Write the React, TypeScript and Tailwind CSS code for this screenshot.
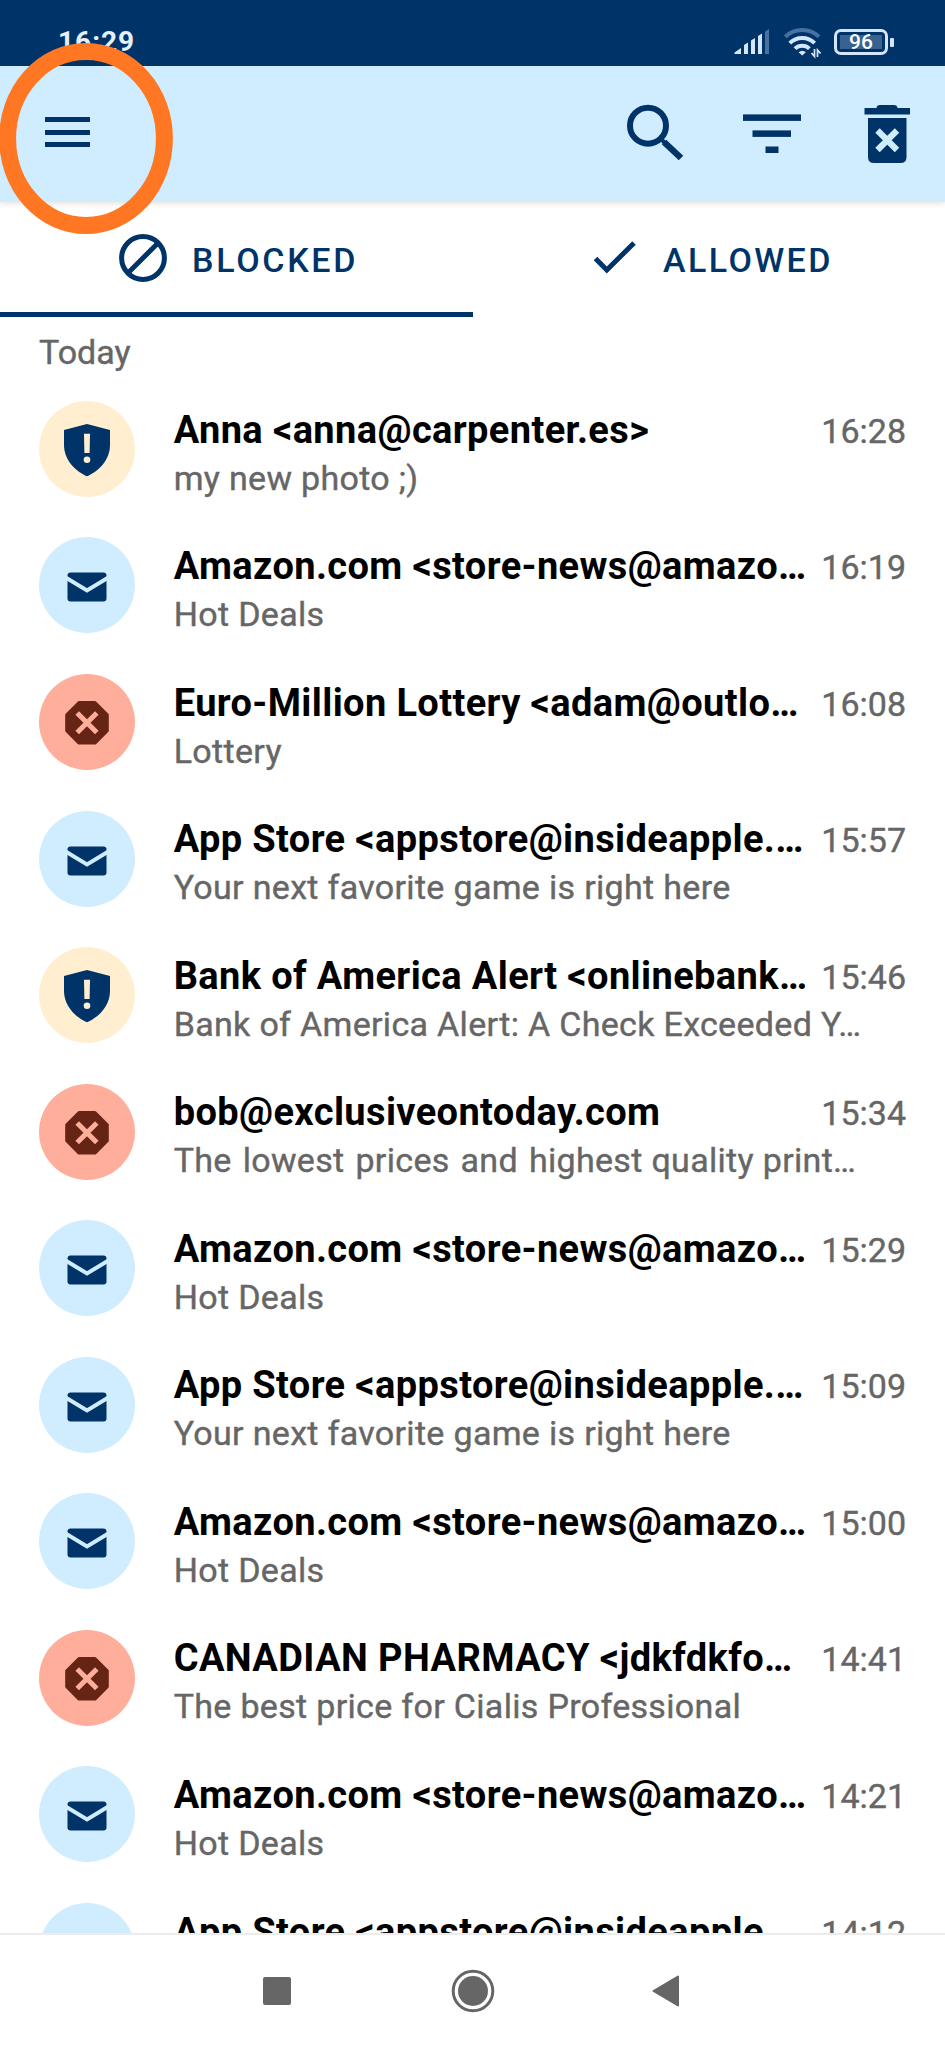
type Kind = "warning" | "mail" | "spam";

interface Message {
  id: number;
  kind: Kind;
  sender: string;
  // leading part of the subject that is set with wider word gaps
  spaced?: string;
  subject?: string;
  time: string;
}

const messages: Message[] = [
  { id: 1, kind: "warning", sender: "Anna <anna@carpenter.es>", subject: "my new photo ;)", time: "16:28" },
  { id: 2, kind: "mail", sender: "Amazon.com <store-news@amazo…", subject: "Hot Deals", time: "16:19" },
  { id: 3, kind: "spam", sender: "Euro-Million Lottery <adam@outlo…", subject: "Lottery", time: "16:08" },
  { id: 4, kind: "mail", sender: "App Store <appstore@insideapple.…", subject: "Your next favorite game is right here", time: "15:57" },
  { id: 5, kind: "warning", sender: "Bank of America Alert <onlinebank…", subject: "Bank of America Alert: A Check Exceeded Y…", time: "15:46" },
  { id: 6, kind: "spam", sender: "bob@exclusiveontoday.com", spaced: "The lowest prices and highest", subject: " quality print…", time: "15:34" },
  { id: 7, kind: "mail", sender: "Amazon.com <store-news@amazo…", subject: "Hot Deals", time: "15:29" },
  { id: 8, kind: "mail", sender: "App Store <appstore@insideapple.…", subject: "Your next favorite game is right here", time: "15:09" },
  { id: 9, kind: "mail", sender: "Amazon.com <store-news@amazo…", subject: "Hot Deals", time: "15:00" },
  { id: 10, kind: "spam", sender: "CANADIAN PHARMACY <jdkfdkfo…", subject: "The best price for Cialis Professional", time: "14:41" },
  { id: 11, kind: "mail", sender: "Amazon.com <store-news@amazo…", subject: "Hot Deals", time: "14:21" },
  { id: 12, kind: "mail", sender: "App Store <appstore@insideapple.…", time: "14:12" },
];

const avatarBg: Record<Kind, string> = {
  warning: "bg-[#ffefd0]",
  mail: "bg-[#d0ecff]",
  spam: "bg-[#ffae9b]",
};

const Avatar = ({ kind }: { kind: Kind }) => (
  <div className={`size-24 shrink-0 rounded-full ${avatarBg[kind]}`}>
    <svg viewBox="0 0 96 96" className="size-24">
      {kind === "warning" && (
        <>
          <path d="M48 23 L71 29 V44 C71 58 61 69.5 48 75.3 C35 69.5 25 58 25 44 V29 Z" fill="#003468" />
          <path d="M45 32.8 H51 L50.6 52 H45.4 Z" fill="#ffefd0" />
          <circle cx="48" cy="58.7" r="3.3" fill="#ffefd0" />
        </>
      )}
      {kind === "mail" && (
        <>
          <rect x="28.5" y="35.4" width="39" height="29" rx="3" fill="#003468" />
          <path d="M27 40.8 L48 53.4 L69 40.8" fill="none" stroke="#d0ecff" strokeWidth="4" />
        </>
      )}
      {kind === "spam" && (
        <>
          <path
            d="M40 28.5 H56 L68.3 40.8 V56.8 L56 69.1 H40 L27.7 56.8 V40.8 Z"
            fill="#662415"
            stroke="#662415"
            strokeWidth="3"
            strokeLinejoin="round"
          />
          <path d="M38.2 39 L57.8 58.6 M57.8 39 L38.2 58.6" stroke="#ffae9b" strokeWidth="5" />
        </>
      )}
    </svg>
  </div>
);

const MessageRow = ({ message }: { message: Message }) => (
  <li className="flex h-[136.54px] shrink-0 items-center pr-[39px] pl-[38.7px]">
    <Avatar kind={message.kind} />
    <div className="ml-[39px] h-full min-w-0 flex-1 pt-[26px]">
      <div className="flex h-[46px] items-baseline justify-between leading-[46px] whitespace-nowrap">
        <span className="text-[38px] font-bold tracking-[0.38px] text-black">{message.sender}</span>
        <span className="text-[34px] text-[#666] [-webkit-text-stroke:0.4px_#666]">{message.time}</span>
      </div>
      <p className="mt-[2px] text-[34px] leading-[46px] tracking-[0.32px] whitespace-pre text-[#666] [-webkit-text-stroke:0.4px_#666]">
        {message.spaced && <span className="[word-spacing:2.2px]">{message.spaced}</span>}
        {message.subject}
      </p>
    </div>
  </li>
);

const StatusBar = () => (
  <div className="flex h-[66px] shrink-0 items-start justify-between bg-[#003468] pr-[51px] pl-[58px]">
    <span className="pt-[25px] text-[28px] leading-[34px] font-bold tracking-[1px] text-[#e6effa]">16:29</span>
    <div className="flex pt-[26px]">
      <svg width="36" height="32" viewBox="0 0 36 32" fill="#d6e6fa">
        <path d="M0.5 28 V26.5 L7 22 V28 Z" />
        <path d="M10 28 V19 L14 16.5 V28 Z" />
        <path d="M17 28 V14.5 L21 12 V28 Z" />
        <path d="M24 28 V10 L28 7.5 V28 Z" />
        <path d="M31 28 V5.5 L35 3 V28 Z" fill="#47719f" />
      </svg>
      <svg className="ml-[13px]" width="40" height="34" viewBox="0 0 40 34" fill="none" strokeWidth="4">
        <path d="M2.3 10.8 A24.5 24.5 0 0 1 36 10.8" stroke="#47719f" />
        <path d="M6.8 17.2 A17.5 17.5 0 0 1 31.6 17.2" stroke="#d6e6fa" />
        <path d="M12 22.6 A10.5 10.5 0 0 1 26.4 22.6" stroke="#d6e6fa" />
        <path d="M15.5 26.3 Q19.2 23 22.9 26.3 L19.2 29.6 Z" fill="#d6e6fa" stroke="none" />
        <path d="M28.5 27 L31.5 30.5 V23 M34.5 31 V24 L37.6 27.5" stroke="#d6e6fa" strokeWidth="1.7" />
      </svg>
      <div className="mt-[3px] ml-[11px] flex h-[26px] items-center">
        <div className="flex h-[26px] w-[54px] items-center justify-center rounded-[7px] border-3 border-[#d6e6fa] p-[3px]">
          <div className="flex h-full w-full items-center justify-center bg-[#38628f] text-[21px] leading-none font-medium text-white">
            96
          </div>
        </div>
        <div className="ml-0.5 h-[9px] w-1 rounded-[1px] bg-[#d6e6fa]" />
      </div>
    </div>
  </div>
);

const AppBar = () => (
  <header className="z-10 flex h-[136px] shrink-0 items-center justify-between bg-[#d0ecff] pr-[34px] pl-[45px] shadow-[0_1px_6px_rgba(90,40,0,0.16)]">
    <button className="flex w-[45px] flex-col gap-[7.6px] pb-1">
      <span className="h-[5px] w-full bg-[#003468]" />
      <span className="h-[5px] w-full bg-[#003468]" />
      <span className="h-[5px] w-full bg-[#003468]" />
    </button>
    <div className="flex items-center">
      <button>
        <svg width="60" height="60" viewBox="0 0 60 60" fill="none" stroke="#003468">
          <circle cx="23" cy="21.7" r="18" strokeWidth="6" />
          <path d="M39 38 L56 54" strokeWidth="6.5" />
          <path d="M36 35 L42 41" strokeWidth="4" />
        </svg>
      </button>
      <button className="ml-[58px]">
        <svg width="58" height="60" viewBox="0 0 58 60" fill="#003468">
          <rect x="0" y="10.4" width="58" height="6.5" />
          <rect x="9.5" y="26.4" width="38.5" height="6.5" />
          <rect x="22.5" y="42.5" width="13" height="6.5" />
        </svg>
      </button>
      <button className="ml-[63px]">
        <svg width="47" height="60" viewBox="0 0 47 60" fill="#003468">
          <path d="M0.5 4 H12.5 C12.5 2.2 14 1 16 1 H30 C32 1 33.5 2.2 33.5 4 H46 V10.6 H0.5 Z" />
          <path d="M4 14 H42.5 V53 Q42.5 59 36.5 59 H10 Q4 59 4 53 Z" />
          <path d="M13.5 26.5 L33 46 M33 26.5 L13.5 46" stroke="#d0ecff" strokeWidth="6.2" />
        </svg>
      </button>
    </div>
  </header>
);

const Tabs = () => (
  <div className="grid h-[115px] shrink-0 grid-cols-2 text-[34px] font-medium tracking-[2.7px] text-[#003468]">
    <button className="flex items-center border-b-[5.5px] border-[#003468] pt-0.5 pl-[119px]">
      <svg width="48" height="48" viewBox="0 0 48 48" fill="none" stroke="#003468" strokeWidth="5">
        <circle cx="24" cy="24" r="21.4" />
        <path d="M9.5 38.5 L38.5 9.5" />
      </svg>
      <span className="ml-[25px] pt-[4px]">BLOCKED</span>
    </button>
    <button className="flex items-center border-b-[5.5px] border-transparent pt-0.5 pl-[120px]">
      <svg width="44" height="48" viewBox="0 0 44 48" fill="none" stroke="#003468" strokeWidth="5">
        <path d="M2.5 24.5 L13.8 36 L41 9" />
      </svg>
      <span className="ml-[26.5px] pt-[4px] tracking-[2.4px]">ALLOWED</span>
    </button>
  </div>
);

const NavBar = () => (
  <nav className="flex h-[115px] shrink-0 items-center border-t-2 border-[#ececec] bg-white pb-px pl-[262.5px]">
    <div className="size-[28px] rounded-[2px] bg-[#666]" />
    <svg className="ml-[160.5px]" width="44" height="44" viewBox="0 0 44 44">
      <circle cx="22" cy="22" r="19.8" fill="none" stroke="#666" strokeWidth="3" />
      <circle cx="22" cy="22" r="15" fill="#666" />
    </svg>
    <svg className="ml-[157px]" width="28" height="32" viewBox="0 0 28 32">
      <path d="M1.5 16 L26 1.5 V30.5 Z" fill="#666" stroke="#666" strokeWidth="2" strokeLinejoin="round" />
    </svg>
  </nav>
);

const App = () => (
  <div className="relative flex h-[2048px] w-[945px] flex-col overflow-hidden bg-white font-['Roboto',sans-serif]">
    <StatusBar />
    <AppBar />
    <Tabs />
    <main className="flex min-h-0 flex-1 flex-col overflow-hidden">
      <h2 className="h-[63.7px] shrink-0 pt-[12px] pl-[39px] text-[34px] leading-[46px] text-[#666] [-webkit-text-stroke:0.4px_#666]">
        Today
      </h2>
      <ul className="flex flex-col">
        {messages.map((message) => (
          <MessageRow key={message.id} message={message} />
        ))}
      </ul>
    </main>
    <NavBar />
    {/* highlight ring around the menu button */}
    <svg className="absolute top-[38px] left-0 z-20" width="180" height="200" viewBox="0 0 180 200">
      <ellipse cx="86" cy="100.5" rx="78.4" ry="87" fill="none" stroke="#ff7623" strokeWidth="17" />
    </svg>
  </div>
);

export default App;
